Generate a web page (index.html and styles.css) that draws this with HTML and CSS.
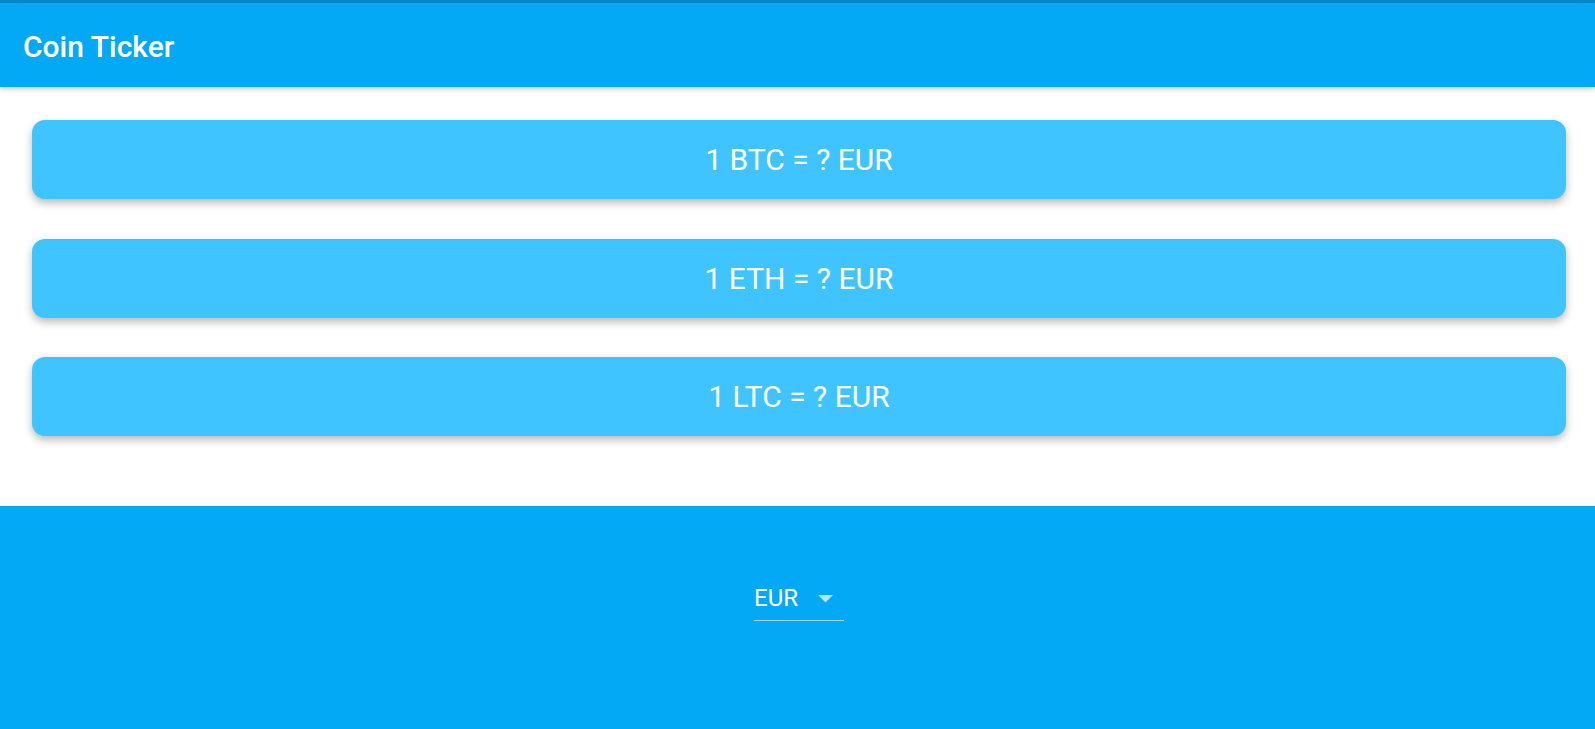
FILE: index.html
```html
<!DOCTYPE html>
<html lang="en">
<head>
<meta charset="utf-8">
<title>Coin Ticker</title>
<link rel="stylesheet" href="styles.css">
</head>
<body>
<div class="app">
  <div class="statusbar"></div>
  <header class="appbar">
    <h1 class="title">Coin Ticker</h1>
  </header>
  <main class="cards">
    <div class="card">1 BTC = ? EUR</div>
    <div class="card">1 ETH = ? EUR</div>
    <div class="card">1 LTC = ? EUR</div>
  </main>
  <footer class="picker">
    <div class="dropdown">
      <div class="dd-row">
        <span class="dd-value">EUR</span>
        <svg class="dd-arrow" width="15" height="8" viewBox="0 0 15 8"><path d="M0 0 L15 0 L7.5 7.5 Z" fill="#b3e5fc"/></svg>
      </div>
    </div>
  </footer>
</div>
</body>
</html>
```
FILE: styles.css
```css
html, body {
  margin: 0;
  padding: 0;
  background: #ffffff;
  font-family: Roboto, "Liberation Sans", sans-serif;
}
.app {
  display: flex;
  flex-direction: column;
  height: 729px;
  overflow: hidden;
}
.statusbar {
  height: 3px;
  background: #0689c9;
  flex: none;
}
.appbar {
  flex: none;
  height: 84px;
  box-sizing: border-box;
  padding: 26px 0 0 23px;
  background: #03a9f4;
  box-shadow: 0 2px 5px rgba(0, 0, 0, 0.22);
  position: relative;
  z-index: 1;
}
.title {
  margin: 0;
  font-size: 30px;
  line-height: 36px;
  font-weight: 500;
  color: #ffffff;
}
.cards {
  flex: none;
  display: flex;
  flex-direction: column;
  gap: 39.5px;
  padding: 33px 29px 70px 32px;
}
.card {
  height: 79px;
  border-radius: 13px;
  background: #40c4ff;
  color: #ffffff;
  font-size: 30px;
  display: flex;
  align-items: center;
  justify-content: center;
  box-shadow: 0 4px 8px rgba(0, 0, 0, 0.28);
}
.picker {
  flex: 1;
  background: #03a9f4;
  display: flex;
  justify-content: center;
  align-items: flex-start;
  padding-top: 78px;
}
.dropdown {
  width: 90px;
  margin-left: 3px;
  border-bottom: 1px solid #a6d3ea;
  padding-bottom: 8px;
}
.dd-row {
  display: flex;
  align-items: center;
}
.dd-value {
  font-size: 24px;
  line-height: 28px;
  color: #ffffff;
}
.dd-arrow {
  margin-left: 20px;
  margin-top: 2px;
}
```
